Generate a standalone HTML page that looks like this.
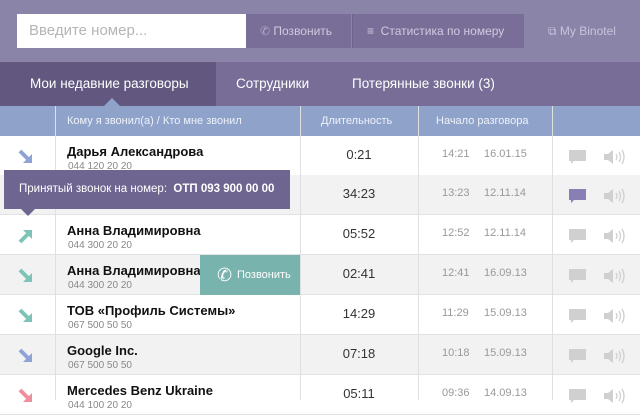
<!DOCTYPE html><html><head><meta charset="utf-8"><style>
*{margin:0;padding:0;box-sizing:border-box}
body{width:640px;height:400px;overflow:hidden;font-family:"Liberation Sans",sans-serif;background:#fff;position:relative}
.hdr{position:absolute;left:0;top:0;width:640px;height:62px;background:#8a84a9}
.inp{position:absolute;left:17px;top:14px;width:229px;height:34px;background:#fff;color:#b5b5b5;font-size:15px;line-height:34px;padding-left:12px}
.btn{position:absolute;top:14px;height:34px;background:#786e98;color:#cfcbe0;font-size:12px;line-height:34px}
.nav{position:absolute;left:0;top:62px;width:640px;height:44px;background:#776d97;color:#fff;font-size:13.5px}
.nav span{position:absolute;top:14px}
.act{position:absolute;left:0;top:0;width:216px;height:44px;background:#62587f}
.th{position:absolute;left:0;top:106px;width:640px;height:30px;background:#8fa3ca;color:#eef1f8;font-size:11px}
.th span{position:absolute;top:9px}
.row{position:absolute;left:0;width:640px;height:40px;border-bottom:1px solid #e2e2e2}
.g{background:#f2f2f2}
.vl{position:absolute;top:106px;width:1px;height:294px;background:#e0e0e0}
.nm{position:absolute;left:67px;top:8px;font-weight:bold;font-size:13px;color:#111}
.ph{position:absolute;left:68px;top:25px;font-size:10px;color:#888}
.du{position:absolute;left:300px;width:118px;text-align:center;top:11px;font-size:13px;color:#333}
.tm{position:absolute;left:442px;top:12px;font-size:11px;color:#999}
.dt{position:absolute;left:484px;top:12px;font-size:11px;color:#999}
.ar{position:absolute;left:17px;top:12px}
.ic{position:absolute;left:568px;top:13px}
</style></head><body>
<div class="hdr">
<div class="inp">Введите номер...</div>
<div class="btn" style="left:246px;width:105px;padding-left:14px"><span style="color:#b0a9c8">&#9990;</span> Позвонить</div>
<div class="btn" style="left:352px;width:172px;padding-left:14px;border-left:1px solid #6d648c">≡&nbsp; Статистика по номеру</div>
<div style="position:absolute;left:548px;top:24px;color:#c8c3dc;font-size:12px">⧉ My Binotel</div>
</div>
<div class="nav"><div class="act"></div>
<span style="left:30px">Мои недавние разговоры</span><span style="left:236px">Сотрудники</span><span style="left:352px">Потерянные звонки (3)</span>
<div style="position:absolute;left:104px;top:36px;width:0;height:0;border:8px solid transparent;border-bottom-color:#8fa3ca;border-top:0"></div></div>
<div class="th"><span style="left:67px">Кому я звонил(а) / Кто мне звонил</span><span style="left:321px">Длительность</span><span style="left:436px">Начало разговора</span></div>
<div id="rows"></div>
<script>
var d=[["#8fa3d6",0,"Дарья Александрова","044 120 20 20","0:21","14:21","16.01.15"],
["#8fa3d6",0,"","","34:23","13:23","12.11.14"],
["#7cc4b8",1,"Анна Владимировна","044 300 20 20","05:52","12:52","12.11.14"],
["#7cc4b8",0,"Анна Владимировна","044 300 20 20","02:41","12:41","16.09.13"],
["#7cc4b8",0,"ТОВ «Профиль Системы»","067 500 50 50","14:29","11:29","15.09.13"],
["#8fa3d6",0,"Google Inc.","067 500 50 50","07:18","10:18","15.09.13"],
["#ef8f9c",0,"Mercedes Benz Ukraine","044 100 20 20","05:11","09:36","14.09.13"]];
var h="";d.forEach(function(r,i){var t=136+i*40-(i>0?1:0);
var arr=r[1]?'<path d="M3 15 L12 6" stroke="'+r[0]+'" stroke-width="4"/><path d="M6 3 H15 V12 Z" fill="'+r[0]+'"/>':'<path d="M3 3 L12 12" stroke="'+r[0]+'" stroke-width="4"/><path d="M6 15 H15 V6 Z" fill="'+r[0]+'"/>';
var cc=i==1?"#8a7fb5":"#d0d0d0";
h+='<div class="row'+(i%2?' g':'')+'" style="top:'+t+'px"><svg class="ar" width="18" height="18">'+arr+'</svg><div class="nm">'+r[2]+'</div><div class="ph">'+r[3]+'</div><div class="du">'+r[4]+'</div><div class="tm">'+r[5]+'</div><div class="dt">'+r[6]+'</div><svg class="ic" width="60" height="16"><path d="M1 1H18V12H6L3 15V12H1Z" fill="'+cc+'"/><path d="M36 5H40L45 1V15L40 11H36Z" fill="#d0d0d0"/><path d="M48 5Q50 8 48 11M51 3Q54 8 51 13M54 1Q58 8 54 15" stroke="#d0d0d0" fill="none" stroke-width="1.3"/></svg></div>';});
document.getElementById("rows").innerHTML=h;
</script>
<div class="vl" style="left:55px"></div><div class="vl" style="left:300px"></div><div class="vl" style="left:418px"></div><div class="vl" style="left:552px"></div>
<div style="position:absolute;left:4px;top:170px;width:286px;height:39px;background:#6f6591;color:#fff;font-size:11.5px;line-height:39px;padding-left:15px">Принятый звонок на номер:&nbsp; <b>ОТП 093 900 00 00</b></div>
<div style="position:absolute;left:21px;top:209px;width:0;height:0;border:7px solid transparent;border-top-color:#6f6591;border-bottom:0"></div>
<div style="position:absolute;left:200px;top:255px;width:100px;height:40px;background:#78b3ad;color:#fff;font-size:11px;line-height:40px;padding-left:37px"><span style="position:absolute;left:17px;font-size:18px">&#9990;</span>Позвонить</div>
</body></html>
